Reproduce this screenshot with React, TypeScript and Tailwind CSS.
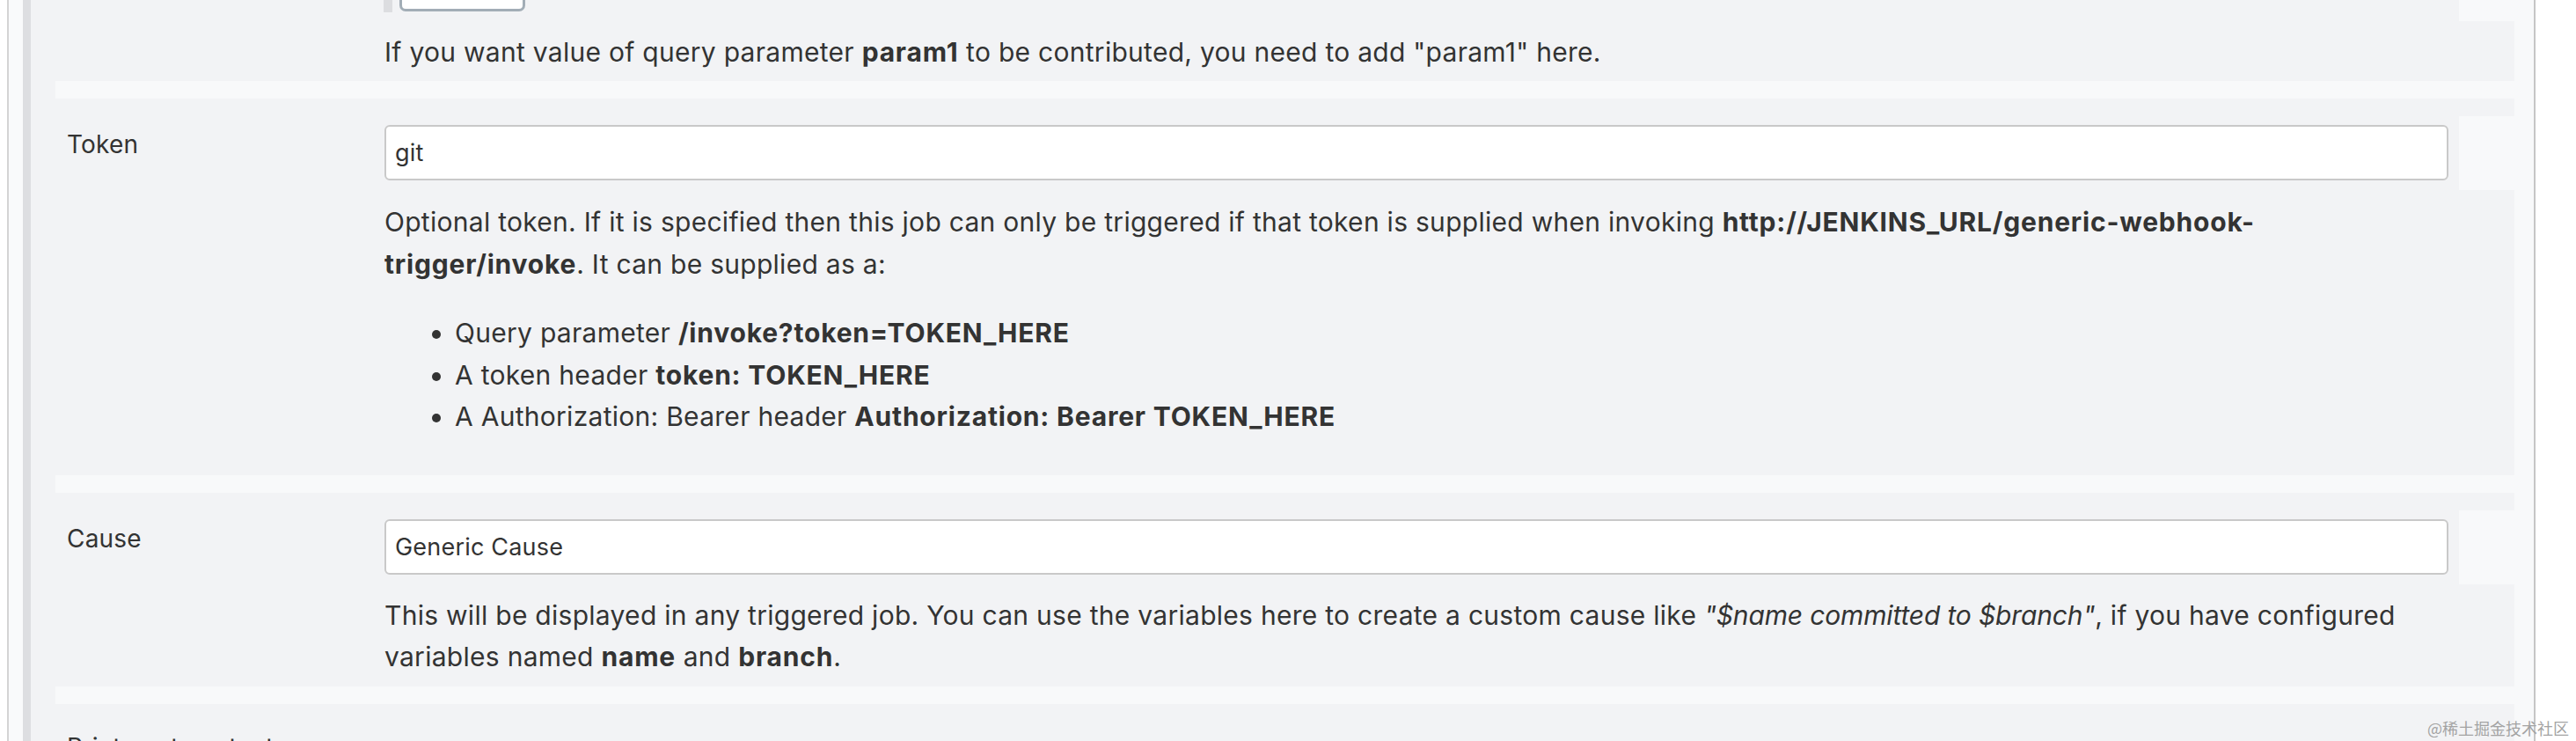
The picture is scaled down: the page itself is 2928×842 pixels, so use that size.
import React from "react";

const SEP = () => <div className="ml-[28px] h-[20px] w-[2795px] shrink-0 bg-[#f8f9fa]" />;

const B = ({ children }: { children: React.ReactNode }) => (
  <b className="font-bold tracking-[0.8px]">{children}</b>
);

function FieldRow({
  label,
  value,
  height,
  children,
}: {
  label: string;
  value: string;
  height: string;
  children: React.ReactNode;
}) {
  return (
    <div className={`flex shrink-0 pt-[20px] ${height}`}>
      <div className="w-[402px] shrink-0 pl-[41px] pt-[12px] text-[28px] leading-[40px] tracking-[0.2px]">{label}</div>
      <div className="w-[2346px] shrink-0">
        <div className="pt-[10px]">
          <input
            readOnly
            value={value}
            className="block h-[63px] w-full rounded-[6px] border-2 border-[#c9c9c9] bg-white px-[10px] text-[27px] tracking-[0.2px] text-[#333] outline-none"
          />
        </div>
        <div className="mt-[23px] text-[30px] leading-[48px] tracking-[0.28px]">{children}</div>
      </div>
      <div className="ml-[12px] h-[84px] w-[63px] shrink-0 bg-[#f8f9fa]" />
    </div>
  );
}

export default function App() {
  return (
    <div className="relative h-[842px] w-[2928px] overflow-hidden bg-white font-['Inter',sans-serif] text-[#333]">
      <div className="flex h-full">
        <div className="w-[8px] shrink-0 bg-white" />
        <div className="w-[2px] shrink-0 bg-[#d4d4d4]" />
        <div className="w-[16px] shrink-0 bg-[#f9fafb]" />
        <div className="w-[9px] shrink-0 bg-[#dddee1]" />
        <main className="flex w-[2823px] shrink-0 flex-col bg-[#f2f3f5]">
          {/* previous row tail */}
          <div className="flex h-[92px] shrink-0">
            <div className="w-[401px] shrink-0" />
            <div className="w-[2347px] shrink-0">
              <div className="flex items-start">
                <div className="h-[14px] w-[10px] bg-[#dcdde0]" />
                <div className="ml-[8px] -mt-[40px] h-[53px] w-[143px] rounded-[7px] border-[3px] border-[#a2adb6] bg-white" />
              </div>
              <p className="mt-[21px] pl-[1px] text-[30px] leading-[48px] tracking-[0.28px]">
                If you want value of query parameter <B>param1</B> to be contributed, you need to add "param1" here.
              </p>
            </div>
            <div className="ml-[12px] h-[24px] w-[63px] shrink-0 bg-[#f8f9fa]" />
          </div>
          <SEP />
          <FieldRow label="Token" value="git" height="h-[428px]">
            <p>
              Optional token. If it is specified then this job can only be triggered if that token is supplied when
              invoking{" "}
              <B>
                http://JENKINS_URL/generic-webhook-
                <br />
                trigger/invoke
              </B>
              . It can be supplied as a:
            </p>
            <ul className="mt-[31px] list-disc pl-[80px] leading-[47.5px]">
              <li>
                Query parameter <B>/invoke?token=TOKEN_HERE</B>
              </li>
              <li>
                A token header <B>token: TOKEN_HERE</B>
              </li>
              <li>
                A Authorization: Bearer header <B>Authorization: Bearer TOKEN_HERE</B>
              </li>
            </ul>
          </FieldRow>
          <SEP />
          <FieldRow label="Cause" value="Generic Cause" height="h-[220px]">
            <p className="leading-[47px]">
              This will be displayed in any triggered job. You can use the variables here to create a custom cause
              like <i className="tracking-[-0.15px]">"$name committed to $branch"</i>, if you have configured
              variables named <B>name</B> and <B>branch</B>.
            </p>
          </FieldRow>
          <SEP />
          <div className="flex shrink-0 pt-[29px]">
            <div className="w-[402px] shrink-0 pl-[41px] text-[28px] leading-[40px]">Print post content</div>
          </div>
        </main>
        <div className="w-[22px] shrink-0 bg-[#f8f9fa]" />
        <div className="w-[2px] shrink-0 bg-[#c6c6c6]" />
        <div className="flex-1 bg-white" />
      </div>
      <div className="absolute bottom-[6px] right-[8px] font-['Noto_Sans_CJK_SC',sans-serif] text-[18px] leading-none text-[#a3a3a3]">
        @稀土掘金技术社区
      </div>
    </div>
  );
}
